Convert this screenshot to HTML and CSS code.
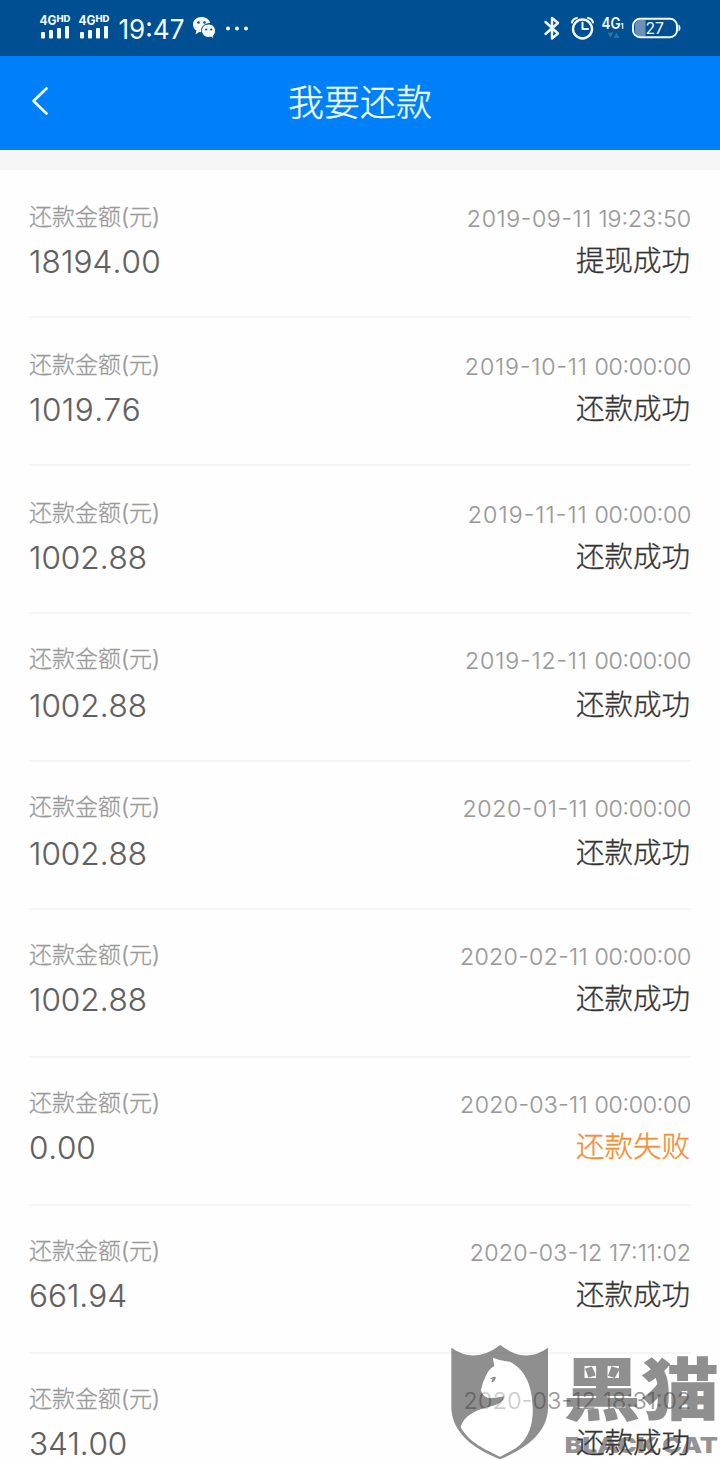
FILE: index.html
```
<!DOCTYPE html>
<html lang="zh-CN">
<head>
<meta charset="utf-8">
<title>我要还款</title>
<link rel="stylesheet" href="styles.css">
</head>
<body>
<div class="screen">
  <header class="status-bar">
    <svg class="status-icons" width="720" height="56" viewBox="0 0 720 56">
      <g class="ink">
        <g id="signal">
          <text class="net" x="39.5" y="24.5" textLength="17" lengthAdjust="spacingAndGlyphs">4G</text>
          <text class="net-sup" x="56.5" y="21.5" textLength="14" lengthAdjust="spacingAndGlyphs">HD</text>
          <rect x="41" y="32" width="4" height="6.500" rx="1"/>
          <rect x="49" y="30" width="4" height="8.500" rx="1"/>
          <rect x="57" y="28" width="4" height="10.500" rx="1"/>
          <rect x="65" y="26" width="4" height="12.500" rx="1"/>
        </g>
        <use href="#signal" x="39"/>
        <text class="clock" x="118.5" y="39" textLength="66" lengthAdjust="spacingAndGlyphs">19:47</text>
        <path d="M201.500 17c-4.800 0-8.500 3.200-8.500 7.500 0 2.500 1.300 4.700 3.400 6.100l-.9 4 3.600-2.700 3 .4c-1-5.500 3-9.200 8.300-9.200-.8-3.500-4.400-6.100-8.900-6.100z"/>
        <path d="M208.500 24c-4.100 0-7 2.900-7 6.500s3 7 7 7l2.600-.4 2.900 2-.8-3c1.400-1.100 2.300-3.200 2.300-5.400 0-3.900-3-6.700-7-6.700z" class="bubble"/>
        <circle cx="228" cy="28.500" r="2"/><circle cx="237" cy="28.500" r="2"/><circle cx="246" cy="28.500" r="2"/>
      </g>
      <g class="cut">
        <circle cx="198.500" cy="22.500" r="1.300"/><circle cx="204.500" cy="22.500" r="1.300"/>
        <circle cx="206.200" cy="29.500" r="1.100"/><circle cx="211.200" cy="29.500" r="1.100"/>
      </g>
      <path class="line" d="M545.500 22l12.500 11.500-6 5V18l6 5-12.500 11"/>
      <circle class="line" cx="582.500" cy="29" r="9.500"/>
      <path class="line thin" d="M582.500 22.500v6.500h5.500M572 22.500q.5-3.500 5-4.500M593 22.500q-.5-3.500-5-4.500"/>
      <g class="ink">
        <text class="net big" x="601.500" y="28.500" textLength="19" lengthAdjust="spacingAndGlyphs">4G</text>
        <text class="net tiny" x="620.500" y="29">1</text>
      </g>
      <path class="dim" d="M607.500 32.500h6l-3 5.500zM613.500 38l3-5.500 3 5.500z"/>
      <path class="charge" d="M645.500 20v16.500h-5q-5.500 0-5.500-5.500v-5.500q0-5.500 5.500-5.500z"/>
      <rect class="line case" x="633" y="18.800" width="44" height="18.400" rx="7"/>
      <path class="ink" d="M678.500 24.500q2 .5 2 3.500t-2 3.500z"/>
      <text class="ink battery" x="645.5" y="34" textLength="18.5" lengthAdjust="spacingAndGlyphs">27</text>
    </svg>
  </header>

  <nav class="nav-bar">
    <svg class="back" width="20" height="30" viewBox="0 0 20 30"><path d="M16.500 2.500L3.500 15l13 12.500"/></svg>
    <h1 class="title">我要还款</h1>
  </nav>

  <main class="list">
    <section class="row">
      <div class="meta"><span class="label">还款金额(元)</span><time class="date"><span class="wide">2019-09-11</span> 19:23:50</time></div>
      <div class="detail"><span class="amount loose">18194.00</span><span class="state">提现成功</span></div>
    </section>
    <section class="row">
      <div class="meta"><span class="label">还款金额(元)</span><time class="date"><span class="wider">2019-10-11</span> <span class="tight">00:00:00</span></time></div>
      <div class="detail"><span class="amount looser">1019.76</span><span class="state">还款成功</span></div>
    </section>
    <section class="row">
      <div class="meta"><span class="label">还款金额(元)</span><time class="date"><span class="widest">2019-11-11</span> <span class="tight">00:00:00</span></time></div>
      <div class="detail"><span class="amount">1002.88</span><span class="state">还款成功</span></div>
    </section>
    <section class="row meta-up">
      <div class="meta"><span class="label">还款金额(元)</span><time class="date"><span class="wider">2019-12-11</span> <span class="tight">00:00:00</span></time></div>
      <div class="detail"><span class="amount">1002.88</span><span class="state">还款成功</span></div>
    </section>
    <section class="row meta-up">
      <div class="meta"><span class="label">还款金额(元)</span><time class="date"><span class="medium">2020-01-11</span> <span class="tight">00:00:00</span></time></div>
      <div class="detail"><span class="amount">1002.88</span><span class="state">还款成功</span></div>
    </section>
    <section class="row all-up">
      <div class="meta"><span class="label">还款金额(元)</span><time class="date"><span class="slight">2020-02-11</span> <span class="tight">00:00:00</span></time></div>
      <div class="detail"><span class="amount">1002.88</span><span class="state">还款成功</span></div>
    </section>
    <section class="row all-up">
      <div class="meta"><span class="label">还款金额(元)</span><time class="date"><span class="slight">2020-03-11</span> <span class="tight">00:00:00</span></time></div>
      <div class="detail"><span class="amount snug">0.00</span><span class="state failed">还款失败</span></div>
    </section>
    <section class="row all-up">
      <div class="meta"><span class="label">还款金额(元)</span><time class="date"><span class="slight">2020-03-12</span> 17:11:02</time></div>
      <div class="detail"><span class="amount">661.94</span><span class="state">还款成功</span></div>
    </section>
    <section class="row all-up">
      <div class="meta"><span class="label">还款金额(元)</span><time class="date"><span class="slight">2020-03-12</span> 18:31:02</time></div>
      <div class="detail"><span class="amount snug">341.00</span><span class="state">还款成功</span></div>
    </section>
  </main>

  <svg class="watermark" width="280" height="125" viewBox="0 0 840 375">
    <path class="mark" fill-rule="evenodd" d="M34 38Q105 88 181 30Q255 88 324 38V220C322 302 244 346 180 373C112 346 37 300 34 220ZM159 69L163 94C143 104 139 122 129 143L123 166C127 180 136 189 154 190L192 184C190 202 170 211 146 216C109 224 73 242 62 275C86 323 140 344 180 365C200 355 224 344 238 331C266 305 278 270 278 225C278 150 253 103 211 81L181 76Z"/>
    <path class="cat" d="M159 69L163 94C143 104 139 122 129 143L123 166C127 180 136 189 154 190L192 184C190 202 170 211 146 216C109 224 73 242 62 275C86 323 140 344 180 365C200 355 224 344 238 331C266 305 278 270 278 225C278 150 253 103 211 81L181 76Z"/>
    <path class="mark" d="M150 132Q157 124 168 126L165 136Q160 144 154 140L158 131Z"/>
    <text class="mark brand" x="368" y="240" textLength="470" lengthAdjust="spacingAndGlyphs">黑猫</text>
    <text class="mark brand-en" x="374" y="353" textLength="460" lengthAdjust="spacingAndGlyphs">BLACK CAT</text>
  </svg>
</div>
</body>
</html>
```
FILE: styles.css
```
* { box-sizing: border-box; }
body { margin: 0; background: #fefefe; font-family: Inter, "Noto Sans CJK SC", sans-serif; }
.screen { position: relative; width: 720px; height: 1460px; overflow: hidden; }
.status-bar { height: 56px; background: #004f93; }
.status-icons { display: block; }
.ink { fill: #f4fbff; }
.bubble { stroke: #004f93; stroke-width: 1; }
.cut { fill: #004f93; }
.line { fill: none; stroke: #f4fbff; stroke-width: 2.4; stroke-linejoin: round; stroke-linecap: round; }
.thin { stroke-width: 2; }
.case { stroke-width: 2; }
.dim { fill: #356f9f; }
.charge { fill: #6d91b3; }
.net { font-size: 13.5px; font-weight: 700; }
.net-sup { font-size: 9px; font-weight: 800; }
.big { font-size: 15.5px; font-weight: 600; }
.tiny { font-size: 7px; }
.clock { font-size: 27px; font-weight: 400; }
.battery { font-size: 16.5px; }

.nav-bar {
  display: grid;
  grid-template-columns: 60px 1fr 60px;
  align-items: center;
  height: 94px;
  background: #0080f8;
}
.back { margin: -5px 0 0 30px; fill: none; stroke: #f2ffff; stroke-width: 2.6; stroke-linecap: round; stroke-linejoin: round; }
.title { margin: 0; text-align: center; color: #f2ffff; font-size: 36px; line-height: 52px; font-weight: 300; -webkit-text-stroke: .35px; }

.list { border-top: 20px solid #f6f6f6; padding: 0 29px; }
.row { height: 148px; padding-top: 30px; border-bottom: 2px solid #f5f5f5; }
.row > div { display: flex; justify-content: space-between; align-items: center; }
.meta { height: 36px; color: #999; }
.detail { height: 44px; margin-top: 4px; }
.meta-up { padding-top: 28px; }
.meta-up .detail { margin-top: 6px; }
.all-up { padding-top: 28px; }
.label { font-size: 23px; line-height: 36px; font-weight: 300; margin-top: -2px; -webkit-text-stroke: .3px; }
.date { padding-top: 2px; font-size: 23.200px; line-height: 36px; font-weight: 300; font-kerning: none; font-feature-settings: "case"; -webkit-text-stroke: .15px; }
.tight { letter-spacing: -.3px; }
.slight { letter-spacing: .3px; }
.medium { letter-spacing: .55px; }
.wide { letter-spacing: .6px; }
.wider { letter-spacing: .87px; }
.widest { letter-spacing: 1.1px; }
.amount { font-size: 31.500px; line-height: 44px; font-weight: 300; font-kerning: none; color: #606060; -webkit-text-stroke: .15px; }
.loose { letter-spacing: .15px; }
.looser { letter-spacing: .5px; }
.snug { letter-spacing: -.2px; }
.state { margin: -2px 1px 0 0; font-size: 28.500px; line-height: 44px; font-weight: 300; color: #333; -webkit-text-stroke: .35px; }
.failed { color: #ef8f36; }

.watermark { position: absolute; left: 440px; top: 1335px; }
.mark { fill: rgb(66 64 64 / .59); }
.cat { fill: rgb(255 255 255 / .5); }
.brand { font-size: 206px; font-weight: 900; }
.brand-en { font-size: 66px; font-weight: 900; }
```
